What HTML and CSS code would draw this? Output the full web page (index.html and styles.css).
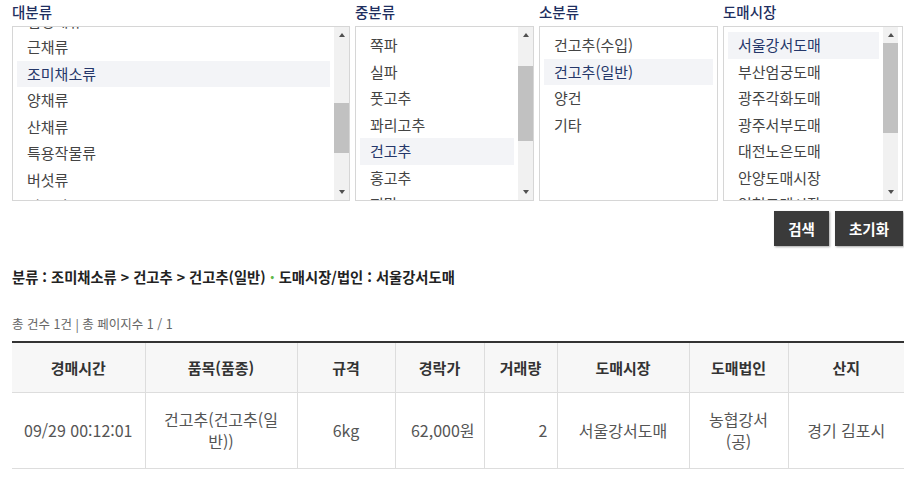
FILE: index.html
```html
<!DOCTYPE html>
<html lang="ko">
<head>
<meta charset="utf-8">
<link rel="stylesheet" href="styles.css">
</head>
<body>
<div class="page">
  <div class="filters">
    <div class="field">
      <div class="label">대분류</div>
      <div class="box">
        <ul class="list scrolled">
          <li>엽경채류</li>
          <li>근채류</li>
          <li class="sel">조미채소류</li>
          <li>양채류</li>
          <li>산채류</li>
          <li>특용작물류</li>
          <li>버섯류</li>
          <li>약용작물류</li>
        </ul>
        <div class="sb">
          <div class="arr"><span class="up"></span></div>
          <div class="track"><div class="thumb" style="margin-top:60px;height:50px"></div></div>
          <div class="arr"><span class="down"></span></div>
        </div>
      </div>
    </div>
    <div class="field">
      <div class="label">중분류</div>
      <div class="box">
        <ul class="list">
          <li>쪽파</li>
          <li>실파</li>
          <li>풋고추</li>
          <li>꽈리고추</li>
          <li class="sel">건고추</li>
          <li>홍고추</li>
          <li>피망</li>
        </ul>
        <div class="sb">
          <div class="arr"><span class="up"></span></div>
          <div class="track"><div class="thumb" style="margin-top:23px;height:75px"></div></div>
          <div class="arr"><span class="down"></span></div>
        </div>
      </div>
    </div>
    <div class="field">
      <div class="label">소분류</div>
      <div class="box">
        <ul class="list">
          <li>건고추(수입)</li>
          <li class="sel">건고추(일반)</li>
          <li>양건</li>
          <li>기타</li>
        </ul>
      </div>
    </div>
    <div class="field">
      <div class="label">도매시장</div>
      <div class="box box-last">
        <ul class="list">
          <li class="sel">서울강서도매</li>
          <li>부산엄궁도매</li>
          <li>광주각화도매</li>
          <li>광주서부도매</li>
          <li>대전노은도매</li>
          <li>안양도매시장</li>
          <li>인천도매시장</li>
        </ul>
        <div class="sb">
          <div class="arr"><span class="up"></span></div>
          <div class="track"><div class="thumb" style="margin-top:0;height:90px"></div></div>
          <div class="arr"><span class="down"></span></div>
        </div>
      </div>
    </div>
  </div>

  <div class="actions">
    <button class="btn btn-search">검색</button>
    <button class="btn btn-reset">초기화</button>
  </div>

  <p class="crumb">분류 : 조미채소류 &gt; 건고추 &gt; 건고추(일반) <span class="dot">·</span> 도매시장/법인 : 서울강서도매</p>

  <p class="count">총 건수 1건 | 총 페이지수 1 / 1</p>

  <table class="result">
    <colgroup>
      <col class="c1"><col class="c2"><col class="c3"><col class="c4"><col class="c5"><col class="c6"><col class="c7"><col class="c8">
    </colgroup>
    <thead>
      <tr>
        <th>경매시간</th>
        <th>품목(품종)</th>
        <th>규격</th>
        <th>경락가</th>
        <th>거래량</th>
        <th>도매시장</th>
        <th>도매법인</th>
        <th>산지</th>
      </tr>
    </thead>
    <tbody>
      <tr>
        <td>09/29 00:12:01</td>
        <td>건고추(건고추(일반))</td>
        <td>6kg</td>
        <td class="num">62,000원</td>
        <td class="num">2</td>
        <td>서울강서도매</td>
        <td>농협강서(공)</td>
        <td>경기 김포시</td>
      </tr>
    </tbody>
  </table>
</div>
</body>
</html>
```

FILE: styles.css
```css
* { box-sizing: border-box; }
html, body { margin: 0; padding: 0; background: #fff; }
body {
  width: 904px;
  font-family: "Noto Sans CJK KR", "Noto Sans", sans-serif;
  color: #333;
}
.page { padding-left: 12px; }

.filters {
  display: grid;
  grid-template-columns: 338px 179px 179px 180px;
  column-gap: 5px;
}
.label {
  height: 26px;
  line-height: 26px;
  font-size: 14.5px;
  font-weight: 500;
  color: #1f2f5f;
  margin-top: -1px;
  margin-bottom: 1px;
}
.box {
  height: 175px;
  border: 1px solid #d6d6d6;
  display: flex;
  overflow: hidden;
  background: #fff;
}
.box-last { padding-right: 4px; }
.list {
  flex: 1;
  list-style: none;
  margin: 0;
  padding: 5px 4px 5px 4px;
  overflow: hidden;
  min-width: 0;
}
.list.scrolled { margin-top: -24.5px; }
.list li {
  height: 26.5px;
  line-height: 26.5px;
  padding: 0 10px;
  font-size: 15px;
  color: #444;
  white-space: nowrap;
}
.list li.sel {
  background: #f3f4f7;
  color: #25376a;
}
.sb {
  width: 15px;
  display: flex;
  flex-direction: column;
  background: #f1f1f1;
}
.arr {
  height: 16px;
  display: flex;
  align-items: center;
  justify-content: center;
}
.up, .down {
  width: 0; height: 0;
  border-left: 3.5px solid transparent;
  border-right: 3.5px solid transparent;
}
.up { border-bottom: 4px solid #505050; }
.down { border-top: 4px solid #505050; }
.track { flex: 1; }
.thumb { background: #c1c1c1; }

.actions {
  display: flex;
  justify-content: flex-end;
  gap: 6px;
  margin-top: 10px;
  padding-right: 1px;
}
.btn {
  height: 35px;
  border: 0;
  background: #3a3a3a;
  color: #fff;
  font-family: inherit;
  font-size: 14.5px;
  font-weight: 700;
  padding: 0;
  box-shadow: 1px 1px 2px rgba(0,0,0,0.35);
  cursor: pointer;
}
.btn-search { width: 55px; }
.btn-reset { width: 68px; }

.crumb {
  margin: 21px 0 0;
  font-size: 14.3px;
  line-height: 20px;
  font-weight: 700;
  color: #222;
}
.crumb .dot { color: #5fb84a; font-weight: 900; }

.count {
  margin: 28px 0 0;
  font-size: 12.5px;
  line-height: 18px;
  color: #666;
}

.result {
  margin-top: 8px;
  width: 892px;
  border-collapse: collapse;
  table-layout: fixed;
  border-top: 2px solid #333;
}
.c1 { width: 133px; }
.c2 { width: 152px; }
.c3 { width: 98px; }
.c4 { width: 89px; }
.c5 { width: 73px; }
.c6 { width: 132px; }
.c7 { width: 99px; }
.c8 { width: 116px; }
.result th, .result td {
  border-left: 1px solid #ddd;
  border-bottom: 1px solid #ddd;
  text-align: center;
  padding: 0 10px;
}
.result th:first-child, .result td:first-child { border-left: 0; }
.result th {
  height: 50px;
  background: #f7f7f7;
  font-size: 15px;
  font-weight: 700;
  color: #333;
}
.result td {
  height: 76px;
  font-size: 16px;
  line-height: 22px;
  color: #555;
}
.result td.num { text-align: right; padding-right: 9px; }
```
